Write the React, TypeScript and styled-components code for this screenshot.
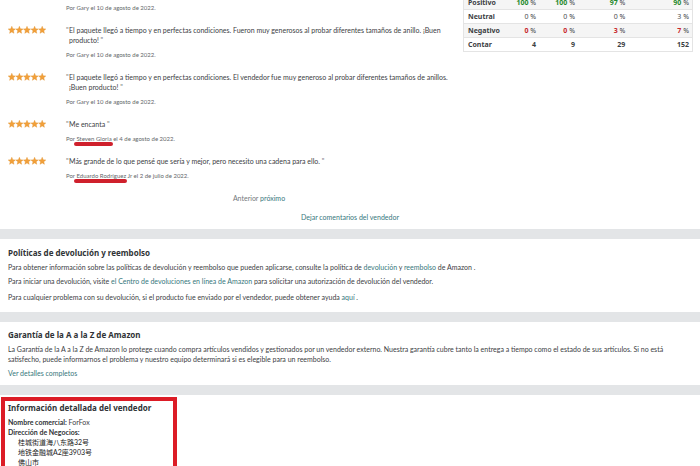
import React from "react";
import styled, { createGlobalStyle } from "styled-components";

const GlobalStyle = createGlobalStyle`
  * { box-sizing: border-box; }
  body {
    margin: 0;
    background: #fff;
    color: #3c4043;
    font: 7px/10px Lato, "Noto Sans CJK SC", sans-serif;
  }
  h2, p, ul { margin: 0; padding: 0; }
`;

const Page = styled.main`
  display: flex;
  flex-direction: column;
  height: 100vh;
  overflow: hidden;
`;

const Band = styled.hr`
  flex: none;
  width: 100%;
  height: 10px;
  margin: 0;
  border: 0;
  background: #e3e5e7;
`;

const Feedback = styled.section`
  flex: none;
  padding-bottom: 7px;
`;

const FeedbackColumns = styled.div`
  display: grid;
  grid-template-columns: 1fr 230px;
  column-gap: 11px;
  align-items: start;
  padding: 0 7px 0 8px;
`;

const ReviewList = styled.ul`
  display: flex;
  flex-direction: column;
  gap: 12px;
  padding-top: 3px;
  list-style: none;
`;

const ReviewRow = styled.li`
  display: grid;
  grid-template-columns: 38px 1fr;
  column-gap: 20px;
`;

const ReviewBody = styled.div`
  display: flex;
  flex-direction: column;
  gap: 5px;
  grid-column: 2;
`;

const ReviewText = styled.p`
  display: grid;
  grid-template-columns: 3px 1fr;
`;

const Quote = styled.span`
  color: #74777a;
`;

const Author = styled.p`
  color: #64676a;
  font-size: 6px;
`;

const MarkedName = styled.span`
  position: relative;

  &::after {
    content: "";
    position: absolute;
    left: -2px;
    right: -1px;
    bottom: -4px;
    height: 4px;
    border-radius: 2px;
    background: #cf202c;
  }
`;

const StarIcons = styled.svg`
  display: block;
  width: 38px;
  height: 8px;
  margin-top: 1px;
  fill: #f2a03a;
  stroke: #e0922f;
  stroke-width: 0.4;
`;

const Pager = styled.nav`
  padding: 12px 0 9px 58px;
  text-align: center;
`;

const Link = styled.a<{ $muted?: boolean }>`
  color: ${(p) => (p.$muted ? "#74797b" : "#37777c")};
  text-decoration: none;
`;

const LeaveFeedback = styled.p`
  text-align: center;
`;

const RatingTable = styled.table`
  width: 100%;
  margin-top: -5px;
  border: 1px solid #e4e4e4;
  border-collapse: collapse;
  table-layout: fixed;
`;

const RatingRow = styled.tr`
  border-top: 1px solid #e4e4e4;

  &:nth-child(odd) { background: #f5f5f5; }
`;

const LabelCell = styled.th`
  width: 19%;
  height: 14px;
  padding: 0 0 0 4px;
  font: 700 7px/10px "Noto Sans", sans-serif;
  text-align: left;
`;

const ValueCell = styled.td<{ $strong?: boolean }>`
  padding: 0 3px 0 0;
  font: ${(p) => (p.$strong ? 700 : 400)} 7px/10px "Noto Sans", sans-serif;
  text-align: right;

  &:nth-child(2) { width: 14%; }
  &:nth-child(3) { width: 17%; }
  &:nth-child(4) { width: 22%; }
`;

const tones = { good: "#1f8a2c", plain: "#4a4d50", bad: "#c8282c" };
type Tone = keyof typeof tones;

const Figure = styled.span<{ $tone: Tone }>`
  color: ${(p) => tones[p.$tone]};
  font-weight: ${(p) => (p.$tone === "plain" ? 400 : 700)};
`;

const Panel = styled.section`
  display: flex;
  flex: none;
  flex-direction: column;
  gap: 4px;
  padding: 8px;
`;

const GuaranteePanel = styled(Panel)`
  padding: 7px 8px;
`;

const Heading = styled.h2`
  font: 700 8px/11px "Noto Sans", sans-serif;
  color: #303336;
`;

const Paragraph = styled.p<{ $spaced?: boolean }>`
  padding-bottom: ${(p) => (p.$spaced ? 2 : 0)}px;
`;

const SellerPanel = styled(Panel)`
  position: relative;
  flex: 1 0 auto;
  padding-top: 7px;
`;

const Highlight = styled.div`
  position: absolute;
  top: 2px;
  left: 1px;
  width: 176px;
  height: 84px;
  border: 4px solid #dc1c26;
  pointer-events: none;
`;

const Term = styled.strong`
  font: 700 7px/10px Lato, sans-serif;
  color: #303336;
`;

const Address = styled.address`
  padding-left: 10px;
  color: #222;
  font-style: normal;
`;

const starX = [0, 7.6, 15.2, 22.8, 30.4];

function Stars() {
  return (
    <StarIcons viewBox="0 0 38 8" role="img" aria-label="5 de 5 estrellas">
      {starX.map((x) => (
        <path
          key={x}
          transform={`translate(${x} 0)`}
          d="M3.8 0.3 4.8 2.8 7.4 3 5.4 4.7 6 7.3 3.8 5.9 1.6 7.3 2.2 4.7 0.2 3 2.8 2.8Z"
        />
      ))}
    </StarIcons>
  );
}

type Review = { text?: string; name: string; suffix?: string; date: string; marked?: boolean };

const reviews: Review[] = [
  { name: "Gary", date: "10 de agosto de 2022." },
  {
    text: "El paquete llegó a tiempo y en perfectas condiciones. Fueron muy generosos al probar diferentes tamaños de anillo. ¡Buen producto!",
    name: "Gary",
    date: "10 de agosto de 2022.",
  },
  {
    text: "El paquete llegó a tiempo y en perfectas condiciones. El vendedor fue muy generoso al probar diferentes tamaños de anillos. ¡Buen producto!",
    name: "Gary",
    date: "10 de agosto de 2022.",
  },
  { text: "Me encanta", name: "Steven Gloria", date: "4 de agosto de 2022.", marked: true },
  {
    text: "Más grande de lo que pensé que sería y mejor, pero necesito una cadena para ello.",
    name: "Eduardo Rodríguez",
    suffix: " Jr",
    date: "2 de julio de 2022.",
    marked: true,
  },
];

const ratings: { label: string; tone: Tone; values: number[] }[] = [
  { label: "Positivo", tone: "good", values: [100, 100, 97, 90] },
  { label: "Neutral", tone: "plain", values: [0, 0, 0, 3] },
  { label: "Negativo", tone: "bad", values: [0, 0, 3, 7] },
];
const counts = [4, 9, 29, 152];

export default function App() {
  return (
    <Page>
      <GlobalStyle />
      <Feedback>
        <FeedbackColumns>
          <div>
            <ReviewList>
              {reviews.map((r, i) => (
                <ReviewRow key={i}>
                  {r.text && <Stars />}
                  <ReviewBody>
                    {r.text && (
                      <ReviewText>
                        <Quote>"</Quote>
                        <span>
                          {r.text} <Quote>"</Quote>
                        </span>
                      </ReviewText>
                    )}
                    <Author>
                      Por {r.marked ? <MarkedName>{r.name}</MarkedName> : r.name}
                      {r.suffix} el {r.date}
                    </Author>
                  </ReviewBody>
                </ReviewRow>
              ))}
            </ReviewList>
            <Pager>
              <Link href="#anterior" $muted>Anterior</Link> <Link href="#proximo">próximo</Link>
            </Pager>
          </div>
          <RatingTable>
            <tbody>
              {ratings.map((row) => (
                <RatingRow key={row.label}>
                  <LabelCell scope="row">{row.label}</LabelCell>
                  {row.values.map((v, i) => (
                    <ValueCell key={i}>
                      <Figure $tone={row.tone}>{v}</Figure> %
                    </ValueCell>
                  ))}
                </RatingRow>
              ))}
              <RatingRow>
                <LabelCell scope="row">Contar</LabelCell>
                {counts.map((v) => (
                  <ValueCell key={v} $strong>{v}</ValueCell>
                ))}
              </RatingRow>
            </tbody>
          </RatingTable>
        </FeedbackColumns>
        <LeaveFeedback>
          <Link href="#comentarios">Dejar comentarios del vendedor</Link>
        </LeaveFeedback>
      </Feedback>
      <Band />
      <Panel>
        <Heading>Políticas de devolución y reembolso</Heading>
        <Paragraph>
          Para obtener información sobre las políticas de devolución y reembolso que pueden aplicarse, consulte la política de{" "}
          <Link href="#devolucion">devolución</Link> y <Link href="#reembolso">reembolso</Link> de Amazon .
        </Paragraph>
        <Paragraph $spaced>
          Para iniciar una devolución, visite <Link href="#centro">el Centro de devoluciones en línea de Amazon</Link> para
          solicitar una autorización de devolución del vendedor.
        </Paragraph>
        <Paragraph $spaced>
          Para cualquier problema con su devolución, si el producto fue enviado por el vendedor, puede obtener ayuda{" "}
          <Link href="#ayuda">aquí</Link> .
        </Paragraph>
      </Panel>
      <Band />
      <GuaranteePanel>
        <Heading>Garantía de la A a la Z de Amazon</Heading>
        <Paragraph>
          La Garantía de la A a la Z de Amazon lo protege cuando compra artículos vendidos y gestionados por un vendedor
          externo. Nuestra garantía cubre tanto la entrega a tiempo como el estado de sus artículos. Si no está satisfecho,
          puede informarnos el problema y nuestro equipo determinará si es elegible para un reembolso.
        </Paragraph>
        <Paragraph>
          <Link href="#detalles">Ver detalles completos</Link>
        </Paragraph>
      </GuaranteePanel>
      <Band />
      <SellerPanel>
        <Highlight />
        <Heading>Información detallada del vendedor</Heading>
        <div>
          <Paragraph>
            <Term>Nombre comercial:</Term> ForFox
          </Paragraph>
          <Paragraph>
            <Term>Dirección de Negocios:</Term>
          </Paragraph>
          <Address lang="zh">
            桂城街道海八东路32号
            <br />
            地铁金融城A2座3903号
            <br />
            佛山市
          </Address>
        </div>
      </SellerPanel>
    </Page>
  );
}
